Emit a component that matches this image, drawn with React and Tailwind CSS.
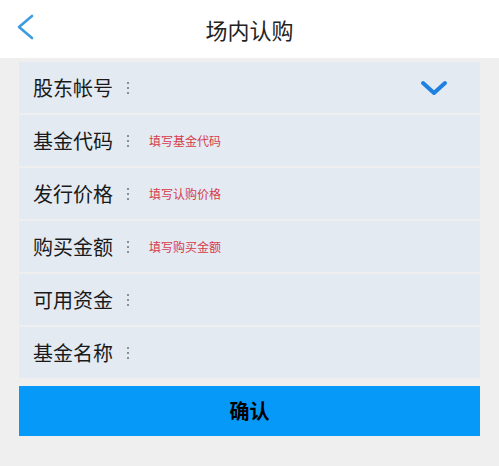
const FIELDS = [
  { label: "股东帐号", select: true },
  { label: "基金代码", placeholder: "填写基金代码" },
  { label: "发行价格", placeholder: "填写认购价格" },
  { label: "购买金额", placeholder: "填写购买金额" },
  { label: "可用资金" },
  { label: "基金名称" },
];

const FONT = { fontFamily: '"Noto Sans CJK SC", "Noto Sans", sans-serif' };

// three little grey dots after each label
const Dots = () => (
  <span className="ml-[14px] flex flex-col gap-[3px]">
    <span className="h-[2px] w-[2px] rounded-full bg-gray-500" />
    <span className="h-[2px] w-[2px] rounded-full bg-gray-500" />
    <span className="h-[2px] w-[2px] rounded-full bg-gray-500" />
  </span>
);

const FieldRow = ({ field }) => (
  <div className="flex h-[51px] items-center bg-[#e4eaf2] pl-[14px] pr-[32px]">
    <span className="text-[20px] leading-none text-[#1a1a1a]">{field.label}</span>
    <Dots />
    {field.placeholder && (
      <span className="ml-[20px] text-[12px] leading-none text-[#d63c4a]">{field.placeholder}</span>
    )}
    {field.select && (
      <svg className="ml-auto" width="28" height="18" viewBox="0 0 28 18" fill="none">
        <path d="M3 4 L14 14 L25 4" stroke="#1f80e0" strokeWidth="4" strokeLinecap="round" strokeLinejoin="round" />
      </svg>
    )}
  </div>
);

export default function App() {
  return (
    <div className="h-[466px] w-[499px] bg-[#efefef]" style={FONT}>
      <header className="relative flex h-[58px] items-center justify-center bg-white">
        <svg className="absolute left-[16px] top-[14px]" width="20" height="26" viewBox="0 0 20 26" fill="none">
          <path d="M16 2 L3 13 L16 24" stroke="#3d9be0" strokeWidth="2.6" strokeLinecap="round" strokeLinejoin="round" />
        </svg>
        <h1 className="text-[22px] text-[#222]">场内认购</h1>
      </header>

      <div className="flex flex-col gap-[2px] px-[19px] pt-[4px]">
        {FIELDS.map((f) => (
          <FieldRow key={f.label} field={f} />
        ))}
      </div>

      <div className="px-[19px] pt-[8px]">
        <button className="flex h-[50px] w-full items-center justify-center bg-[#0799f7] text-[20px] font-bold text-black">
          确认
        </button>
      </div>
    </div>
  );
}
